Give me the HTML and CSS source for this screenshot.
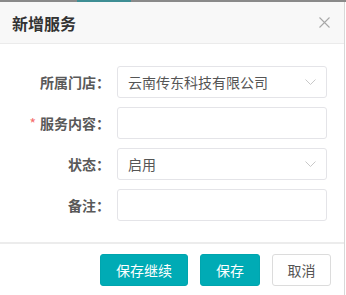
FILE: index.html
```html
<!DOCTYPE html>
<html lang="zh-CN">
<head>
  <meta charset="UTF-8">
  <meta name="viewport" content="width=device-width, initial-scale=1.0">
  <title>新增服务</title>
  <link rel="stylesheet" href="styles.css">
</head>
<body>
  <div class="page-edge">
    <span class="page-edge__link"></span>
  </div>

  <div class="dialog">
    <div class="dialog__header">
      <span class="dialog__title">新增服务</span>
      <span class="dialog__close">
        <svg width="11" height="11" viewBox="0 0 11 11">
          <path d="M0.5 0.5 L10.5 10.5 M10.5 0.5 L0.5 10.5" stroke="#a8a8a8" stroke-width="1.1" fill="none"/>
        </svg>
      </span>
    </div>

    <div class="dialog__body">
      <div class="form-row">
        <label class="form-label">所属门店：</label>
        <div class="form-control form-select">
          <span class="form-select__value">云南传东科技有限公司</span>
          <svg class="form-select__arrow" width="11" height="6" viewBox="0 0 11 6">
            <path d="M0.5 0.5 L5.5 5.5 L10.5 0.5" stroke="#c8c8c8" stroke-width="1" fill="none"/>
          </svg>
        </div>
      </div>

      <div class="form-row">
        <label class="form-label"><span class="required">*</span>服务内容：</label>
        <div class="form-control"></div>
      </div>

      <div class="form-row">
        <label class="form-label">状态：</label>
        <div class="form-control form-select">
          <span class="form-select__value">启用</span>
          <svg class="form-select__arrow" width="11" height="6" viewBox="0 0 11 6">
            <path d="M0.5 0.5 L5.5 5.5 L10.5 0.5" stroke="#c8c8c8" stroke-width="1" fill="none"/>
          </svg>
        </div>
      </div>

      <div class="form-row">
        <label class="form-label">备注：</label>
        <div class="form-control"></div>
      </div>
    </div>

    <div class="dialog__footer">
      <button class="btn btn--primary">保存继续</button>
      <button class="btn btn--primary btn--small">保存</button>
      <button class="btn btn--default">取消</button>
    </div>
  </div>
</body>
</html>
```

FILE: styles.css
```css
body {
  margin: 0;
  background: #fff;
  font-family: "Noto Sans CJK SC", "Noto Sans", sans-serif;
  color: #555;
}

.page-edge {
  height: 2px;
  background: #8a8a8a;
  padding-left: 77px;
}

.page-edge__link {
  display: block;
  width: 54px;
  height: 2px;
  background: #3f8e94;
}

.dialog {
  width: 344px;
  background: #fff;
  border-right: 1px solid #d8d8d8;
}

.dialog__header {
  height: 41px;
  background: #f8f8f8;
  border-bottom: 1px solid #ebebeb;
  display: flex;
  align-items: center;
  justify-content: space-between;
  padding: 0 14px 0 12px;
}

.dialog__title {
  font-size: 16px;
  font-weight: bold;
  color: #333;
}

.dialog__close {
  display: flex;
}

.dialog__body {
  padding: 22px 0 21px;
  display: flex;
  flex-direction: column;
  gap: 9px;
}

.form-row {
  display: flex;
  align-items: center;
}

.form-label {
  width: 110px;
  text-align: right;
  font-size: 14px;
  font-weight: bold;
  color: #595959;
  margin-right: 7px;
}

.required {
  color: #f56c6c;
  margin-right: 4px;
  font-weight: normal;
}

.form-control {
  width: 208px;
  height: 30px;
  border: 1px solid #e4e4e8;
  border-radius: 3px;
  background: #fff;
}

.form-select {
  display: flex;
  align-items: center;
  justify-content: space-between;
  padding: 0 10px 0 10px;
  width: 188px;
}

.form-select__value {
  font-size: 14px;
  color: #555;
}

.dialog__footer {
  border-top: 2px solid #ececec;
  padding: 10px 13px 9px 0;
  display: flex;
  justify-content: flex-end;
  gap: 12px;
}

.btn {
  height: 32px;
  border-radius: 3px;
  font-family: inherit;
  font-size: 14px;
  padding: 0;
  cursor: pointer;
}

.btn--primary {
  width: 88px;
  background: #00abb5;
  border: 1px solid #00a5ae;
  color: #fff;
}

.btn--small {
  width: 60px;
}

.btn--default {
  width: 59px;
  background: #fff;
  border: 1px solid #dcdcdc;
  color: #555;
}
```
